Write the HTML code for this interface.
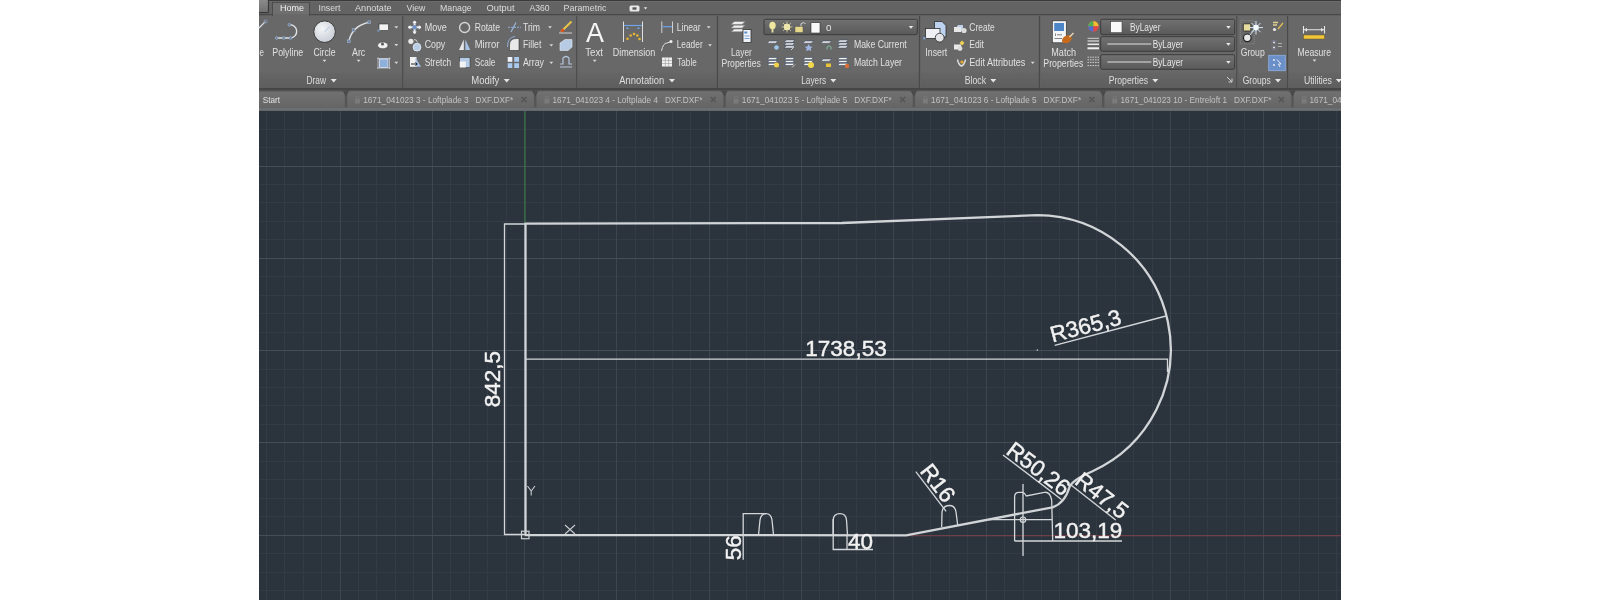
<!DOCTYPE html>
<html><head><meta charset="utf-8">
<style>
html,body{margin:0;padding:0;background:#fff;width:1600px;height:600px;overflow:hidden}
svg{position:absolute;left:0;top:0;display:block;will-change:transform}
text{font-family:"Liberation Sans",sans-serif}
.gm{stroke:#333b46;stroke-width:1}
.gM{stroke:#454d59;stroke-width:1}
.gV{stroke:#3d4550;stroke-width:1}
.rt{fill:#e6e6e6;font-size:10px}
.tt{fill:#d8d8d8;font-size:10px}
.ob{stroke:#e2e4e6;fill:none}
.dm{stroke:#d0d3d6;fill:none;stroke-width:1}
.dt{fill:#f2f2f2;font-size:22.5px;stroke:#f2f2f2;stroke-width:0.45px}
</style></head><body>
<svg width="1600" height="600" viewBox="0 0 1600 600">
<rect x="259" y="0" width="1082" height="600" fill="#2b333d"/>
<!-- grid -->
<g shape-rendering="crispEdges">
<line x1="266.16" y1="111" x2="266.16" y2="600" class="gm"/>
<line x1="284.62" y1="111" x2="284.62" y2="600" class="gm"/>
<line x1="303.08" y1="111" x2="303.08" y2="600" class="gm"/>
<line x1="321.54" y1="111" x2="321.54" y2="600" class="gm"/>
<line x1="358.46" y1="111" x2="358.46" y2="600" class="gm"/>
<line x1="376.92" y1="111" x2="376.92" y2="600" class="gm"/>
<line x1="395.38" y1="111" x2="395.38" y2="600" class="gm"/>
<line x1="413.84" y1="111" x2="413.84" y2="600" class="gm"/>
<line x1="450.76" y1="111" x2="450.76" y2="600" class="gm"/>
<line x1="469.22" y1="111" x2="469.22" y2="600" class="gm"/>
<line x1="487.68" y1="111" x2="487.68" y2="600" class="gm"/>
<line x1="506.14" y1="111" x2="506.14" y2="600" class="gm"/>
<line x1="543.06" y1="111" x2="543.06" y2="600" class="gm"/>
<line x1="561.52" y1="111" x2="561.52" y2="600" class="gm"/>
<line x1="579.98" y1="111" x2="579.98" y2="600" class="gm"/>
<line x1="598.44" y1="111" x2="598.44" y2="600" class="gm"/>
<line x1="635.36" y1="111" x2="635.36" y2="600" class="gm"/>
<line x1="653.82" y1="111" x2="653.82" y2="600" class="gm"/>
<line x1="672.28" y1="111" x2="672.28" y2="600" class="gm"/>
<line x1="690.74" y1="111" x2="690.74" y2="600" class="gm"/>
<line x1="727.66" y1="111" x2="727.66" y2="600" class="gm"/>
<line x1="746.12" y1="111" x2="746.12" y2="600" class="gm"/>
<line x1="764.58" y1="111" x2="764.58" y2="600" class="gm"/>
<line x1="783.04" y1="111" x2="783.04" y2="600" class="gm"/>
<line x1="819.96" y1="111" x2="819.96" y2="600" class="gm"/>
<line x1="838.42" y1="111" x2="838.42" y2="600" class="gm"/>
<line x1="856.88" y1="111" x2="856.88" y2="600" class="gm"/>
<line x1="875.34" y1="111" x2="875.34" y2="600" class="gm"/>
<line x1="912.26" y1="111" x2="912.26" y2="600" class="gm"/>
<line x1="930.72" y1="111" x2="930.72" y2="600" class="gm"/>
<line x1="949.18" y1="111" x2="949.18" y2="600" class="gm"/>
<line x1="967.64" y1="111" x2="967.64" y2="600" class="gm"/>
<line x1="1004.56" y1="111" x2="1004.56" y2="600" class="gm"/>
<line x1="1023.02" y1="111" x2="1023.02" y2="600" class="gm"/>
<line x1="1041.48" y1="111" x2="1041.48" y2="600" class="gm"/>
<line x1="1059.94" y1="111" x2="1059.94" y2="600" class="gm"/>
<line x1="1096.86" y1="111" x2="1096.86" y2="600" class="gm"/>
<line x1="1115.32" y1="111" x2="1115.32" y2="600" class="gm"/>
<line x1="1133.78" y1="111" x2="1133.78" y2="600" class="gm"/>
<line x1="1152.24" y1="111" x2="1152.24" y2="600" class="gm"/>
<line x1="1189.16" y1="111" x2="1189.16" y2="600" class="gm"/>
<line x1="1207.62" y1="111" x2="1207.62" y2="600" class="gm"/>
<line x1="1226.08" y1="111" x2="1226.08" y2="600" class="gm"/>
<line x1="1244.54" y1="111" x2="1244.54" y2="600" class="gm"/>
<line x1="1281.46" y1="111" x2="1281.46" y2="600" class="gm"/>
<line x1="1299.92" y1="111" x2="1299.92" y2="600" class="gm"/>
<line x1="1318.38" y1="111" x2="1318.38" y2="600" class="gm"/>
<line x1="1336.84" y1="111" x2="1336.84" y2="600" class="gm"/>
<line x1="259" y1="129.08" x2="1341" y2="129.08" class="gm"/>
<line x1="259" y1="147.54" x2="1341" y2="147.54" class="gm"/>
<line x1="259" y1="184.46" x2="1341" y2="184.46" class="gm"/>
<line x1="259" y1="202.92" x2="1341" y2="202.92" class="gm"/>
<line x1="259" y1="221.38" x2="1341" y2="221.38" class="gm"/>
<line x1="259" y1="239.84" x2="1341" y2="239.84" class="gm"/>
<line x1="259" y1="276.76" x2="1341" y2="276.76" class="gm"/>
<line x1="259" y1="295.22" x2="1341" y2="295.22" class="gm"/>
<line x1="259" y1="313.68" x2="1341" y2="313.68" class="gm"/>
<line x1="259" y1="332.14" x2="1341" y2="332.14" class="gm"/>
<line x1="259" y1="369.06" x2="1341" y2="369.06" class="gm"/>
<line x1="259" y1="387.52" x2="1341" y2="387.52" class="gm"/>
<line x1="259" y1="405.98" x2="1341" y2="405.98" class="gm"/>
<line x1="259" y1="424.44" x2="1341" y2="424.44" class="gm"/>
<line x1="259" y1="461.36" x2="1341" y2="461.36" class="gm"/>
<line x1="259" y1="479.82" x2="1341" y2="479.82" class="gm"/>
<line x1="259" y1="498.28" x2="1341" y2="498.28" class="gm"/>
<line x1="259" y1="516.74" x2="1341" y2="516.74" class="gm"/>
<line x1="259" y1="553.66" x2="1341" y2="553.66" class="gm"/>
<line x1="259" y1="572.12" x2="1341" y2="572.12" class="gm"/>
<line x1="259" y1="590.58" x2="1341" y2="590.58" class="gm"/>
<line x1="340.00" y1="111" x2="340.00" y2="600" class="gV"/>
<line x1="432.30" y1="111" x2="432.30" y2="600" class="gV"/>
<line x1="524.60" y1="111" x2="524.60" y2="600" class="gV"/>
<line x1="616.90" y1="111" x2="616.90" y2="600" class="gV"/>
<line x1="709.20" y1="111" x2="709.20" y2="600" class="gV"/>
<line x1="801.50" y1="111" x2="801.50" y2="600" class="gV"/>
<line x1="893.80" y1="111" x2="893.80" y2="600" class="gV"/>
<line x1="986.10" y1="111" x2="986.10" y2="600" class="gV"/>
<line x1="1078.40" y1="111" x2="1078.40" y2="600" class="gV"/>
<line x1="1170.70" y1="111" x2="1170.70" y2="600" class="gV"/>
<line x1="1263.00" y1="111" x2="1263.00" y2="600" class="gV"/>
<line x1="259" y1="166.00" x2="1341" y2="166.00" class="gM"/>
<line x1="259" y1="258.30" x2="1341" y2="258.30" class="gM"/>
<line x1="259" y1="350.60" x2="1341" y2="350.60" class="gM"/>
<line x1="259" y1="442.90" x2="1341" y2="442.90" class="gM"/>
<line x1="259" y1="535.20" x2="1341" y2="535.20" class="gM"/>
</g>
<line x1="906" y1="535.7" x2="1341" y2="535.7" stroke="#70404a" stroke-width="1.3"/>
<line x1="525" y1="111" x2="525" y2="224" stroke="#3a7d44" stroke-width="1.1"/>
<path d="M525,224 H504.5 V534.5 H525" stroke="#d4d7da" stroke-width="1.3" fill="none"/>
<path d="M525,359.2 H1167.5 V372" stroke="#d4d7da" stroke-width="1.3" fill="none"/>
<line x1="1054.7" y1="345.3" x2="1166" y2="316" stroke="#d4d7da" stroke-width="1.3" fill="none"/>
<circle cx="1037.3" cy="350" r="0.8" fill="#cfd2d5"/>
<path d="M743.2,559.7 V513.7 H766" stroke="#d4d7da" stroke-width="1.3" fill="none"/>
<path d="M833.2,519 V549.5 H873 M847,535 V549.5" stroke="#d4d7da" stroke-width="1.3" fill="none"/>
<line x1="915.8" y1="471.6" x2="946.1" y2="511.3" stroke="#d4d7da" stroke-width="1.3" fill="none"/>
<line x1="1003" y1="455" x2="1061.5" y2="499.4" stroke="#d4d7da" stroke-width="1.3" fill="none"/>
<line x1="1071" y1="485" x2="1115.7" y2="520" stroke="#d4d7da" stroke-width="1.3" fill="none"/>
<path d="M1014.6,541 V497 Q1014.6,492.3 1019,492.3 H1023 Q1024.5,492.5 1026.3,496 L1044.3,492.3 Q1050,491.5 1051.7,500 L1052.7,541 M1014.6,541 H1122 M989,519.7 H1052.7 M1023,484 V556" stroke="#d4d7da" stroke-width="1.3" fill="none"/>
<circle cx="1023" cy="519.7" r="2.7" stroke="#d4d7da" stroke-width="1.2" fill="none"/>
<path d="M758.5,535 L760,520 Q761,513.7 766,513.7 Q771,513.7 772,520 L773.5,535" stroke="#d4d7da" stroke-width="1.3" fill="none"/>
<path d="M833.2,535 V520 Q833.5,513.7 840,513.7 Q846,513.7 846.5,520 L847.5,535" stroke="#d4d7da" stroke-width="1.3" fill="none"/>
<path d="M941.7,527 L942,512 Q943,505.5 949.5,505.5 Q955,505.5 956,512 L957.7,525" stroke="#d4d7da" stroke-width="1.3" fill="none"/>
<path d="M525.5,535 V223.6 L842,223 L1037.5,215.1 A134.2,134.2 0 0 1 1092,471.5 Q1073,479.5 1069.5,487 Q1065,503 1052.5,507.3 L906,535.3 Z" stroke="#d2d5d8" stroke-width="2.3" fill="none" stroke-linejoin="round"/>
<rect x="521.5" y="531.2" width="7.5" height="7.5" fill="none" stroke="#cfd2d5" stroke-width="1.2"/>
<path d="M527.5,486 L531.2,491 L535,486 M531.2,491 V495.5" stroke="#c8cbce" stroke-width="1.1" fill="none"/>
<path d="M565,525 L575,534 M575,525 L565,534" stroke="#c8cbce" stroke-width="1.1" fill="none"/>
<text x="499.7" y="379.0" transform="rotate(-90.00 499.7 379.0)" class="dt" text-anchor="middle">842,5</text>
<text x="846.0" y="356.3" transform="rotate(0.00 846.0 356.3)" class="dt" text-anchor="middle">1738,53</text>
<text x="1052.5" y="342.5" transform="rotate(-14.75 1052.5 342.5)" class="dt" text-anchor="start">R365,3</text>
<text x="741.0" y="547.7" transform="rotate(-90.00 741.0 547.7)" class="dt" text-anchor="middle">56</text>
<text x="848.0" y="548.5" transform="rotate(0.00 848.0 548.5)" class="dt" text-anchor="start">40</text>
<text x="1053.5" y="537.5" transform="rotate(0.00 1053.5 537.5)" class="dt" text-anchor="start">103,19</text>
<text x="919.2" y="471.3" transform="rotate(52.60 919.2 471.3)" class="dt" text-anchor="start">R16</text>
<text x="1005.0" y="453.0" transform="rotate(37.20 1005.0 453.0)" class="dt" text-anchor="start">R50,26</text>
<text x="1073.5" y="483.0" transform="rotate(38.00 1073.5 483.0)" class="dt" text-anchor="start">R47,5</text>
<!-- ribbon -->
<rect x="259" y="0" width="1082" height="111" fill="#686868"/>
<rect x="259" y="0" width="1082" height="15" fill="#636363"/>
<rect x="259" y="0" width="1082" height="1.1" fill="#3a3a3a"/>
<rect x="259" y="1.1" width="1082" height="0.8" fill="#6e6e6e"/>
<rect x="259" y="14.2" width="1082" height="1" fill="#424242"/>
<defs><linearGradient id="gb" x1="0" y1="0" x2="0" y2="1"><stop offset="0" stop-color="#8a8a8a"/><stop offset="1" stop-color="#707070"/></linearGradient><linearGradient id="gt" x1="0" y1="0" x2="0" y2="1"><stop offset="0" stop-color="#6c6c6c"/><stop offset="1" stop-color="#606060"/></linearGradient><linearGradient id="gd" x1="0" y1="0" x2="0" y2="1"><stop offset="0" stop-color="#727272"/><stop offset="0.5" stop-color="#656565"/><stop offset="1" stop-color="#5a5a5a"/></linearGradient><linearGradient id="gtb" x1="0" y1="0" x2="0" y2="1"><stop offset="0" stop-color="#656565"/><stop offset="1" stop-color="#5e5e5e"/></linearGradient><radialGradient id="gc" cx="0.4" cy="0.35" r="0.7"><stop offset="0" stop-color="#f4f6f8"/><stop offset="1" stop-color="#c6ccd4"/></radialGradient></defs>
<rect x="259" y="0" width="9.2" height="12.2" fill="url(#gb)"/>
<path d="M268.4,0 V12.6 H259" stroke="#333" stroke-width="1" fill="none"/>
<rect x="272.5" y="2.3" width="37" height="13" fill="#6f6f6f" stroke="#454545" stroke-width="0.8"/>
<rect x="273" y="14" width="36" height="2" fill="#686868"/>
<text x="280.0" y="10.9" font-size="8.8" fill="#f2f2f2" textLength="24.0" lengthAdjust="spacingAndGlyphs">Home</text>
<text x="318.5" y="10.9" font-size="8.8" fill="#dcdcdc" textLength="22.0" lengthAdjust="spacingAndGlyphs">Insert</text>
<text x="355.0" y="10.9" font-size="8.8" fill="#dcdcdc" textLength="36.5" lengthAdjust="spacingAndGlyphs">Annotate</text>
<text x="406.6" y="10.9" font-size="8.8" fill="#dcdcdc" textLength="18.8" lengthAdjust="spacingAndGlyphs">View</text>
<text x="440.0" y="10.9" font-size="8.8" fill="#dcdcdc" textLength="31.7" lengthAdjust="spacingAndGlyphs">Manage</text>
<text x="486.6" y="10.9" font-size="8.8" fill="#dcdcdc" textLength="28.0" lengthAdjust="spacingAndGlyphs">Output</text>
<text x="529.5" y="10.9" font-size="8.8" fill="#dcdcdc" textLength="20.1" lengthAdjust="spacingAndGlyphs">A360</text>
<text x="563.6" y="10.9" font-size="8.8" fill="#dcdcdc" textLength="42.9" lengthAdjust="spacingAndGlyphs">Parametric</text>
<rect x="629.5" y="5.5" width="10" height="6" rx="1.5" fill="#e8e8e8"/><rect x="632.5" y="7.3" width="4" height="2.4" fill="#555"/>
<path d="M643.7,7.3 L647.3,7.3 L645.5,9.5 Z" fill="#e0e0e0"/>
<rect x="259" y="72.7" width="1082" height="15.3" fill="url(#gtb)"/>
<rect x="259" y="88" width="1082" height="2.5" fill="#464646"/>
<rect x="402.2" y="16" width="1.2" height="72" fill="#4a4a4a"/>
<rect x="403.4" y="16" width="0.8" height="72" fill="#626262"/>
<rect x="576.2" y="16" width="1.2" height="72" fill="#4a4a4a"/>
<rect x="577.4" y="16" width="0.8" height="72" fill="#626262"/>
<rect x="716.8" y="16" width="1.2" height="72" fill="#4a4a4a"/>
<rect x="718.0" y="16" width="0.8" height="72" fill="#626262"/>
<rect x="918.8" y="16" width="1.2" height="72" fill="#4a4a4a"/>
<rect x="920.0" y="16" width="0.8" height="72" fill="#626262"/>
<rect x="1038.8" y="16" width="1.2" height="72" fill="#4a4a4a"/>
<rect x="1040.0" y="16" width="0.8" height="72" fill="#626262"/>
<rect x="1236.2" y="16" width="1.2" height="72" fill="#4a4a4a"/>
<rect x="1237.4" y="16" width="0.8" height="72" fill="#626262"/>
<rect x="1287.0" y="16" width="1.2" height="72" fill="#4a4a4a"/>
<rect x="1288.2" y="16" width="0.8" height="72" fill="#626262"/>
<text x="259.6" y="55.6" font-size="10.2" fill="#e0e0e0" textLength="4.4" lengthAdjust="spacingAndGlyphs">e</text>
<text x="272.3" y="55.6" font-size="10.2" fill="#e0e0e0" textLength="31.0" lengthAdjust="spacingAndGlyphs">Polyline</text>
<text x="313.4" y="55.6" font-size="10.2" fill="#e0e0e0" textLength="22.2" lengthAdjust="spacingAndGlyphs">Circle</text>
<text x="352.0" y="55.6" font-size="10.2" fill="#e0e0e0" textLength="13.3" lengthAdjust="spacingAndGlyphs">Arc</text>
<text x="424.7" y="30.6" font-size="10.2" fill="#e0e0e0" textLength="22.0" lengthAdjust="spacingAndGlyphs">Move</text>
<text x="424.7" y="48.2" font-size="10.2" fill="#e0e0e0" textLength="20.6" lengthAdjust="spacingAndGlyphs">Copy</text>
<text x="424.7" y="65.8" font-size="10.2" fill="#e0e0e0" textLength="26.6" lengthAdjust="spacingAndGlyphs">Stretch</text>
<text x="474.7" y="30.6" font-size="10.2" fill="#e0e0e0" textLength="25.3" lengthAdjust="spacingAndGlyphs">Rotate</text>
<text x="474.7" y="48.2" font-size="10.2" fill="#e0e0e0" textLength="24.6" lengthAdjust="spacingAndGlyphs">Mirror</text>
<text x="474.7" y="65.8" font-size="10.2" fill="#e0e0e0" textLength="20.6" lengthAdjust="spacingAndGlyphs">Scale</text>
<text x="523.0" y="30.6" font-size="10.2" fill="#e0e0e0" textLength="17.0" lengthAdjust="spacingAndGlyphs">Trim</text>
<text x="523.0" y="48.2" font-size="10.2" fill="#e0e0e0" textLength="18.3" lengthAdjust="spacingAndGlyphs">Fillet</text>
<text x="523.0" y="65.8" font-size="10.2" fill="#e0e0e0" textLength="21.0" lengthAdjust="spacingAndGlyphs">Array</text>
<text x="585.3" y="55.6" font-size="10.2" fill="#e0e0e0" textLength="17.7" lengthAdjust="spacingAndGlyphs">Text</text>
<text x="612.7" y="55.6" font-size="10.2" fill="#e0e0e0" textLength="42.6" lengthAdjust="spacingAndGlyphs">Dimension</text>
<text x="676.7" y="30.6" font-size="10.2" fill="#e0e0e0" textLength="24.0" lengthAdjust="spacingAndGlyphs">Linear</text>
<text x="676.7" y="48.2" font-size="10.2" fill="#e0e0e0" textLength="26.0" lengthAdjust="spacingAndGlyphs">Leader</text>
<text x="677.3" y="65.8" font-size="10.2" fill="#e0e0e0" textLength="19.4" lengthAdjust="spacingAndGlyphs">Table</text>
<text x="731.0" y="55.6" font-size="10.2" fill="#e0e0e0" textLength="20.8" lengthAdjust="spacingAndGlyphs">Layer</text>
<text x="721.5" y="66.6" font-size="10.2" fill="#e0e0e0" textLength="39.3" lengthAdjust="spacingAndGlyphs">Properties</text>
<text x="854.0" y="48.2" font-size="10.2" fill="#e0e0e0" textLength="52.7" lengthAdjust="spacingAndGlyphs">Make Current</text>
<text x="854.0" y="65.8" font-size="10.2" fill="#e0e0e0" textLength="48.0" lengthAdjust="spacingAndGlyphs">Match Layer</text>
<text x="925.3" y="55.6" font-size="10.2" fill="#e0e0e0" textLength="22.0" lengthAdjust="spacingAndGlyphs">Insert</text>
<text x="969.3" y="30.6" font-size="10.2" fill="#e0e0e0" textLength="25.4" lengthAdjust="spacingAndGlyphs">Create</text>
<text x="969.3" y="48.2" font-size="10.2" fill="#e0e0e0" textLength="14.7" lengthAdjust="spacingAndGlyphs">Edit</text>
<text x="969.3" y="65.8" font-size="10.2" fill="#e0e0e0" textLength="56.0" lengthAdjust="spacingAndGlyphs">Edit Attributes</text>
<text x="1051.3" y="55.6" font-size="10.2" fill="#e0e0e0" textLength="24.7" lengthAdjust="spacingAndGlyphs">Match</text>
<text x="1043.3" y="66.6" font-size="10.2" fill="#e0e0e0" textLength="40.0" lengthAdjust="spacingAndGlyphs">Properties</text>
<text x="1240.7" y="55.6" font-size="10.2" fill="#e0e0e0" textLength="24.0" lengthAdjust="spacingAndGlyphs">Group</text>
<text x="1297.5" y="55.6" font-size="10.2" fill="#e0e0e0" textLength="33.5" lengthAdjust="spacingAndGlyphs">Measure</text>
<text x="306.5" y="84.0" font-size="10.2" fill="#dedede" textLength="19.5" lengthAdjust="spacingAndGlyphs">Draw</text>
<path d="M330.7,78.9 L336.7,78.9 L333.7,82.5 Z" fill="#e6e6e6"/>
<text x="471.3" y="84.0" font-size="10.2" fill="#dedede" textLength="28.0" lengthAdjust="spacingAndGlyphs">Modify</text>
<path d="M503.7,78.9 L509.7,78.9 L506.7,82.5 Z" fill="#e6e6e6"/>
<text x="619.3" y="84.0" font-size="10.2" fill="#dedede" textLength="45.0" lengthAdjust="spacingAndGlyphs">Annotation</text>
<path d="M669.0,78.9 L675.0,78.9 L672.0,82.5 Z" fill="#e6e6e6"/>
<text x="801.3" y="84.0" font-size="10.2" fill="#dedede" textLength="24.7" lengthAdjust="spacingAndGlyphs">Layers</text>
<path d="M830.3,78.9 L836.3,78.9 L833.3,82.5 Z" fill="#e6e6e6"/>
<text x="964.7" y="84.0" font-size="10.2" fill="#dedede" textLength="21.3" lengthAdjust="spacingAndGlyphs">Block</text>
<path d="M990.3,78.9 L996.3,78.9 L993.3,82.5 Z" fill="#e6e6e6"/>
<text x="1108.7" y="84.0" font-size="10.2" fill="#dedede" textLength="39.3" lengthAdjust="spacingAndGlyphs">Properties</text>
<path d="M1152.3,78.9 L1158.3,78.9 L1155.3,82.5 Z" fill="#e6e6e6"/>
<text x="1242.7" y="84.0" font-size="10.2" fill="#dedede" textLength="28.0" lengthAdjust="spacingAndGlyphs">Groups</text>
<path d="M1275.0,78.9 L1281.0,78.9 L1278.0,82.5 Z" fill="#e6e6e6"/>
<text x="1303.9" y="84.0" font-size="10.2" fill="#dedede" textLength="28.1" lengthAdjust="spacingAndGlyphs">Utilities</text>
<path d="M1335.8,78.9 L1341.8,78.9 L1338.8,82.5 Z" fill="#e6e6e6"/>
<path d="M394.4,26.3 L398.2,26.3 L396.3,28.5 Z" fill="#d8d8d8"/>
<path d="M394.4,44.0 L398.2,44.0 L396.3,46.2 Z" fill="#d8d8d8"/>
<path d="M394.4,61.7 L398.2,61.7 L396.3,63.9 Z" fill="#d8d8d8"/>
<path d="M548.1,26.3 L551.9,26.3 L550.0,28.5 Z" fill="#d8d8d8"/>
<path d="M549.4,44.3 L553.2,44.3 L551.3,46.5 Z" fill="#d8d8d8"/>
<path d="M549.4,61.7 L553.2,61.7 L551.3,63.9 Z" fill="#d8d8d8"/>
<path d="M706.8,26.3 L710.6,26.3 L708.7,28.5 Z" fill="#d8d8d8"/>
<path d="M708.1,44.3 L711.9,44.3 L710.0,46.5 Z" fill="#d8d8d8"/>
<path d="M1030.8,61.7 L1034.6,61.7 L1032.7,63.9 Z" fill="#d8d8d8"/>
<path d="M322.6,59.8 L326.4,59.8 L324.5,62.0 Z" fill="#d8d8d8"/>
<path d="M356.7,59.8 L360.5,59.8 L358.6,62.0 Z" fill="#d8d8d8"/>
<path d="M592.8,59.8 L596.6,59.8 L594.7,62.0 Z" fill="#d8d8d8"/>
<path d="M1312.6,59.5 L1316.4,59.5 L1314.5,61.7 Z" fill="#d8d8d8"/>
<path d="M1227,77 L1232,82 M1232,78.5 V82 H1228.5" stroke="#d0d0d0" stroke-width="1" fill="none"/>
<rect x="764" y="19.3" width="153.3" height="15.4" rx="1.5" fill="url(#gd)" stroke="#3c3c3c" stroke-width="1"/><path d="M908.7,25.9 L913.3,25.9 L911.0,28.7 Z" fill="#e8e8e8"/>
<rect x="1100.7" y="19.3" width="134.0" height="15.4" rx="1.5" fill="url(#gd)" stroke="#3c3c3c" stroke-width="1"/><path d="M1226.1,25.9 L1230.7,25.9 L1228.4,28.7 Z" fill="#e8e8e8"/>
<rect x="1100.7" y="36.7" width="134.0" height="14.6" rx="1.5" fill="url(#gd)" stroke="#3c3c3c" stroke-width="1"/><path d="M1226.1,42.9 L1230.7,42.9 L1228.4,45.7 Z" fill="#e8e8e8"/>
<rect x="1100.7" y="54.7" width="134.0" height="14.6" rx="1.5" fill="url(#gd)" stroke="#3c3c3c" stroke-width="1"/><path d="M1226.1,60.9 L1230.7,60.9 L1228.4,63.7 Z" fill="#e8e8e8"/>
<rect x="1110.7" y="21.5" width="11.3" height="11.2" fill="#fafafa" stroke="#444" stroke-width="0.6"/>
<text x="1130.0" y="31.0" font-size="10.2" fill="#e8e8e8" textLength="30.5" lengthAdjust="spacingAndGlyphs">ByLayer</text>
<line x1="1107.3" y1="44" x2="1151.3" y2="44" stroke="#e0e0e0" stroke-width="1"/>
<text x="1152.7" y="47.7" font-size="10.2" fill="#e8e8e8" textLength="30.3" lengthAdjust="spacingAndGlyphs">ByLayer</text>
<line x1="1107.3" y1="62" x2="1151.3" y2="62" stroke="#e0e0e0" stroke-width="1"/>
<text x="1152.7" y="65.7" font-size="10.2" fill="#e8e8e8" textLength="30.3" lengthAdjust="spacingAndGlyphs">ByLayer</text>
<rect x="811" y="22.7" width="9" height="10.3" fill="#fafafa" stroke="#333" stroke-width="0.6"/>
<text x="826.0" y="30.8" font-size="9.6" fill="#e8e8e8" textLength="5.5" lengthAdjust="spacingAndGlyphs">0</text>
<path d="M259,28 L265.3,21.6" stroke="#d8dde3" stroke-width="1.3"/><circle cx="265.6" cy="21.5" r="1.6" fill="none" stroke="#7f9bc0" stroke-width="0.9"/>
<path d="M276.7,38 H290.7 A6.6,6.6 0 0 0 289.4,24.8" stroke="#dfe3e8" stroke-width="1.4" fill="none"/>
<circle cx="276.7" cy="38" r="1.4" fill="#6a7f9c" stroke="#9fb2cc" stroke-width="0.7"/>
<circle cx="283.7" cy="38" r="1.4" fill="#6a7f9c" stroke="#9fb2cc" stroke-width="0.7"/>
<circle cx="290.5" cy="38" r="1.4" fill="#6a7f9c" stroke="#9fb2cc" stroke-width="0.7"/>
<circle cx="289.4" cy="24.8" r="1.4" fill="#6a7f9c" stroke="#9fb2cc" stroke-width="0.7"/>
<circle cx="324.6" cy="31.7" r="10.8" fill="url(#gc)" stroke="#3a3a3a" stroke-width="1"/>
<path d="M324.6,31.7 L329.5,26.8" stroke="#a9c4e4" stroke-width="1"/>
<path d="M348.9,41.2 Q352,26 369.1,22.2" stroke="#dfe3e8" stroke-width="1.4" fill="none"/>
<rect x="347.59999999999997" y="39.900000000000006" width="2.6" height="2.6" fill="#6a7f9c" stroke="#9fb2cc" stroke-width="0.7"/>
<rect x="352.2" y="28.7" width="2.6" height="2.6" fill="#6a7f9c" stroke="#9fb2cc" stroke-width="0.7"/>
<rect x="367.8" y="20.9" width="2.6" height="2.6" fill="#6a7f9c" stroke="#9fb2cc" stroke-width="0.7"/>
<rect x="379" y="24" width="9.5" height="6.5" fill="#f2f2f2" stroke="#333" stroke-width="0.6"/><circle cx="378.5" cy="30.5" r="1.3" fill="#7890b0"/>
<ellipse cx="382.8" cy="45.4" rx="5.2" ry="3.4" fill="#f0f0f0" stroke="#444" stroke-width="0.6"/><circle cx="382.5" cy="44" r="1.5" fill="#555"/>
<rect x="379.5" y="59" width="8.5" height="8.5" fill="#8fb0dc" stroke="#dfe7f2" stroke-width="0.8"/><path d="M378,57.5 V69 M389.5,57.5 V69 M377,58.5 H390.5 M377,68 H390.5" stroke="#d0d8e4" stroke-width="0.7"/>
<path d="M414.6,21 V33.4 M408.4,27.2 H420.8" stroke="#e6ebf2" stroke-width="2"/><path d="M414.6,20.4 l-2.2,2.6 h4.4z M414.6,34 l-2.2,-2.6 h4.4z M407.8,27.2 l2.6,-2.2 v4.4z M421.4,27.2 l-2.6,-2.2 v4.4z" fill="#f2f4f8"/><circle cx="414.6" cy="27.2" r="2.2" fill="#6d8fc4"/>
<circle cx="410.9" cy="41.3" r="2.6" fill="#e8e8e8"/><circle cx="417" cy="47.2" r="3.9" fill="#b9cde6" stroke="#e5ecf5" stroke-width="0.8"/><path d="M414,39.5 q3,0 3.5,3" stroke="#ddd" stroke-width="0.9" fill="none"/>
<rect x="410" y="57" width="6.5" height="9.8" fill="#f0f0f0"/><path d="M415.5,57.5 L421,66.8 H415.5 Z" fill="#a9c3e6"/><path d="M411,64 H417 M415.5,62.5 l1.8,1.5 -1.8,1.5" stroke="#111" stroke-width="0.9" fill="none"/>
<circle cx="464.6" cy="27.5" r="5" fill="none" stroke="#d6d6d6" stroke-width="1.4"/>
<path d="M463.8,39.5 L459,50 H463.8 Z" fill="#e8e8e8"/><path d="M465.4,39.5 L470.2,50 H465.4 Z" fill="#a9c3e6"/>
<rect x="459.7" y="57.5" width="10.3" height="10" fill="#b5cbe6" stroke="#333" stroke-width="0.5"/><rect x="459.7" y="61.5" width="6" height="6" fill="#f4f4f4"/>
<path d="M508,27.3 H521" stroke="#8eb0d8" stroke-width="1" stroke-dasharray="2,1"/><path d="M511,32 L516,22.5" stroke="#9ab6dc" stroke-width="1.2"/>
<path d="M509.5,50.5 V45 Q509.5,38.5 516.5,38.5 H519 V50.5 Z" fill="#e8e8e8" stroke="#333" stroke-width="0.6"/><path d="M507.5,47 Q507.5,37 515,36.5" stroke="#8fb0d8" stroke-width="1" fill="none"/>
<rect x="507.7" y="57" width="4.6" height="4.8" fill="#f0f4fa"/><rect x="514.2" y="57" width="4.8" height="4.8" fill="#a9c9ee"/><rect x="507.7" y="63.2" width="4.6" height="4.8" fill="#a9c9ee"/><rect x="514.2" y="63.2" width="4.8" height="4.8" fill="#a9c9ee"/>
<path d="M561,31.8 L571.5,21.5" stroke="#e9c34a" stroke-width="2"/><circle cx="562.5" cy="30.5" r="1.8" fill="#d9541f"/><path d="M559,33 H572" stroke="#cfcfcf" stroke-width="1"/>
<path d="M560,43 L565,39.5 H572 V47 L568,50.5 H560 Z" fill="#b7cbe4" stroke="#e4e9f0" stroke-width="0.6"/>
<path d="M560,67 H572 M560,64 H563 V58 Q566,55 569,58 V64 H572" stroke="#b5c6dc" stroke-width="1.2" fill="none"/>
<text x="586" y="42" font-size="28" fill="#f4f4f4" textLength="18" lengthAdjust="spacingAndGlyphs">A</text>
<path d="M623.5,21.5 V42 M642.5,21.5 V42" stroke="#e0e0e0" stroke-width="1"/><path d="M624,25.5 H642" stroke="#6fa3e6" stroke-width="1.2"/><path d="M626,29 l1.5,-2 1.5,2 z M640,29 l-1.5,-2 -1.5,2z" fill="#6fa3e6"/>
<circle cx="627.5" cy="38.7" r="1.3" fill="#e8b52e"/>
<circle cx="630.7" cy="35.5" r="1.3" fill="#e8b52e"/>
<circle cx="634" cy="34" r="1.3" fill="#e8b52e"/>
<circle cx="637.3" cy="35.5" r="1.3" fill="#e8b52e"/>
<circle cx="639.5" cy="39" r="1.3" fill="#e8b52e"/>
<path d="M661.8,21.5 V33 M672.5,21.5 V33" stroke="#dcdcdc" stroke-width="0.9"/><path d="M662.5,26.7 H672" stroke="#6fa3e6" stroke-width="1.2"/>
<path d="M661.5,51 Q663,43 667,43 L670,42" stroke="#e0e0e0" stroke-width="1" fill="none"/><circle cx="671" cy="41.5" r="1.5" fill="#f0f0f0"/>
<rect x="662" y="57.5" width="10" height="9" fill="#f0f0f0"/><path d="M662,60.5 H672 M662,63.5 H672 M665.3,57.5 V66.5 M668.6,57.5 V66.5" stroke="#9a9a9a" stroke-width="0.6"/>
<path d="M734.3,21.5 L745.3,21.5 L742.0,24.4 L731.0,24.4 Z" fill="#f0f0f0" stroke="#7a7a7a" stroke-width="0.6"/><path d="M734.3,25.2 L745.3,25.2 L742.0,28.1 L731.0,28.1 Z" fill="#f0f0f0" stroke="#7a7a7a" stroke-width="0.6"/><path d="M734.3,29.0 L745.3,29.0 L742.0,31.8 L731.0,31.8 Z" fill="#f0f0f0" stroke="#7a7a7a" stroke-width="0.6"/>
<rect x="743" y="29.5" width="8" height="13" fill="#f0f4f8" stroke="#333" stroke-width="0.8"/><rect x="744.3" y="31.5" width="3" height="2" fill="#5d8fd0"/><path d="M744.5,36 H749.5 M744.5,38.5 H749.5" stroke="#5d8fd0" stroke-width="0.8"/>
<ellipse cx="772.5" cy="25.5" rx="3.2" ry="3.8" fill="#f0e6a0"/><rect x="771.5" y="29" width="2" height="3.5" fill="#e0d9a0"/>
<circle cx="787" cy="27" r="3.2" fill="#f5ecb0"/><path d="M787,21.5 V32.5 M781.5,27 H792.5 M783,23 L791,31 M791,23 L783,31" stroke="#e8e0a8" stroke-width="0.7"/>
<rect x="795" y="26.5" width="8" height="6" fill="#e6d68a" stroke="#555" stroke-width="0.5"/><path d="M801,26.5 V23.8 Q803,21.6 805.5,23.5" stroke="#d0d0d0" stroke-width="1" fill="none"/>
<path d="M769.5,41.0 L778.0,41.0 L775.5,43.2 L767.0,43.2 Z" fill="#f2f2f2" stroke="#3a4a60" stroke-width="0.6"/>
<circle cx="776.5" cy="47.5" r="2.3" fill="#9cc8ee"/>
<path d="M786.5,40.0 L795.0,40.0 L792.5,42.2 L784.0,42.2 Z" fill="#f2f2f2" stroke="#3a4a60" stroke-width="0.6"/><path d="M786.5,42.9 L795.0,42.9 L792.5,45.1 L784.0,45.1 Z" fill="#f2f2f2" stroke="#3a4a60" stroke-width="0.6"/><path d="M786.5,45.8 L795.0,45.8 L792.5,48.0 L784.0,48.0 Z" fill="#f2f2f2" stroke="#3a4a60" stroke-width="0.6"/>
<path d="M791,50 l3,-3" stroke="#ccc" stroke-width="1"/>
<path d="M805.2,41.0 L813.8,41.0 L811.2,43.2 L802.7,43.2 Z" fill="#f2f2f2" stroke="#3a4a60" stroke-width="0.6"/>
<path d="M808.7,44 l1.3,2.5 2.7,.3 -2,1.8 .6,2.7 -2.6,-1.4 -2.6,1.4 .6,-2.7 -2,-1.8 2.7,-.3z" fill="#a0b4e0"/>
<path d="M823.2,41.0 L831.8,41.0 L829.2,43.2 L820.7,43.2 Z" fill="#f2f2f2" stroke="#3a4a60" stroke-width="0.6"/>
<path d="M827,49.5 v-2.5 q2,-2.5 4,0 v2.5" stroke="#7fc0a0" stroke-width="1" fill="none"/>
<path d="M839.8,40.0 L848.3,40.0 L845.8,42.2 L837.3,42.2 Z" fill="#f2f2f2" stroke="#3a4a60" stroke-width="0.6"/><path d="M839.8,42.9 L848.3,42.9 L845.8,45.1 L837.3,45.1 Z" fill="#f2f2f2" stroke="#3a4a60" stroke-width="0.6"/><path d="M839.8,45.8 L848.3,45.8 L845.8,48.0 L837.3,48.0 Z" fill="#f2f2f2" stroke="#3a4a60" stroke-width="0.6"/>

<path d="M769.5,57.5 L778.0,57.5 L775.5,59.7 L767.0,59.7 Z" fill="#f2f2f2" stroke="#3a4a60" stroke-width="0.6"/><path d="M769.5,60.4 L778.0,60.4 L775.5,62.6 L767.0,62.6 Z" fill="#f2f2f2" stroke="#3a4a60" stroke-width="0.6"/><path d="M769.5,63.3 L778.0,63.3 L775.5,65.5 L767.0,65.5 Z" fill="#f2f2f2" stroke="#3a4a60" stroke-width="0.6"/>
<circle cx="776.5" cy="65" r="2.5" fill="#f2d04a"/>
<path d="M786.5,57.5 L795.0,57.5 L792.5,59.7 L784.0,59.7 Z" fill="#f2f2f2" stroke="#3a4a60" stroke-width="0.6"/><path d="M786.5,60.4 L795.0,60.4 L792.5,62.6 L784.0,62.6 Z" fill="#f2f2f2" stroke="#3a4a60" stroke-width="0.6"/><path d="M786.5,63.3 L795.0,63.3 L792.5,65.5 L784.0,65.5 Z" fill="#f2f2f2" stroke="#3a4a60" stroke-width="0.6"/>
<path d="M792,67.5 l3,-3" stroke="#ccc" stroke-width="1"/>
<path d="M805.2,57.5 L813.8,57.5 L811.2,59.7 L802.7,59.7 Z" fill="#f2f2f2" stroke="#3a4a60" stroke-width="0.6"/><path d="M805.2,60.4 L813.8,60.4 L811.2,62.6 L802.7,62.6 Z" fill="#f2f2f2" stroke="#3a4a60" stroke-width="0.6"/><path d="M805.2,63.3 L813.8,63.3 L811.2,65.5 L802.7,65.5 Z" fill="#f2f2f2" stroke="#3a4a60" stroke-width="0.6"/>
<circle cx="811" cy="65" r="3" fill="#f2d94a"/>
<path d="M823.2,59.0 L831.8,59.0 L829.2,61.2 L820.7,61.2 Z" fill="#f2f2f2" stroke="#3a4a60" stroke-width="0.6"/>
<path d="M826,67 h5 v-3.5 h-5z" fill="#e8c23a"/>
<path d="M839.8,57.5 L848.3,57.5 L845.8,59.7 L837.3,59.7 Z" fill="#f2f2f2" stroke="#3a4a60" stroke-width="0.6"/><path d="M839.8,60.4 L848.3,60.4 L845.8,62.6 L837.3,62.6 Z" fill="#f2f2f2" stroke="#3a4a60" stroke-width="0.6"/><path d="M839.8,63.3 L848.3,63.3 L845.8,65.5 L837.3,65.5 Z" fill="#f2f2f2" stroke="#3a4a60" stroke-width="0.6"/>
<circle cx="847" cy="66" r="2.2" fill="#d9703a"/>
<path d="M934.5,21.5 H942 L946,25.5 V37 H934.5 Z" fill="#bcd2ee" stroke="#2e2e2e" stroke-width="0.8"/><rect x="925.5" y="28.5" width="14.5" height="10" fill="#eef0f3" stroke="#2e2e2e" stroke-width="0.8"/><circle cx="939.7" cy="37.7" r="4.4" fill="#e2e4e8" stroke="#2e2e2e" stroke-width="0.8"/><circle cx="924.3" cy="38.3" r="1.3" fill="#7fa0d0"/>
<path d="M954,31 l4,-6 h5 v6z" fill="#bdd0ea"/><rect x="954" y="27" width="7" height="5" fill="#e8e8e8"/><circle cx="964" cy="30.5" r="2.6" fill="#dcdcdc"/>
<rect x="954" y="44.5" width="7" height="5" fill="#e8e8e8"/><circle cx="960" cy="48.5" r="2.4" fill="#dcdcdc"/><path d="M962,40.5 l2.5,2.5 -2.5,2.5 -2.5,-2.5z" fill="#f0d050"/>
<path d="M957.5,59.5 q1,5.5 4,6.5 q3,-1 4,-6.5" stroke="#e0e0e0" stroke-width="1.4" fill="none"/><circle cx="962" cy="62" r="1.6" fill="#e8b030"/>
<rect x="1052.3" y="20.8" width="14" height="22" fill="#f2f4f6" stroke="#333" stroke-width="0.7"/><rect x="1054.2" y="23" width="9.8" height="8" fill="#4c86c8"/><path d="M1055.5,33.5 V36 M1057,34.8 H1062 M1054.5,38.5 H1062" stroke="#666" stroke-width="0.8"/><ellipse cx="1066.8" cy="39.3" rx="5.2" ry="3.6" fill="#c86a1c" transform="rotate(-30 1066.8 39.3)"/><path d="M1069.5,37 L1073.5,33" stroke="#e8d8b0" stroke-width="1.4"/>
<circle cx="1093.3" cy="26.3" r="5.2" fill="#e05050"/><path d="M1093.3,21.1 A5.2,5.2 0 0 1 1098.5,26.3 L1093.3,26.3Z" fill="#f0c030"/><path d="M1098.5,26.3 A5.2,5.2 0 0 1 1093.3,31.5 L1093.3,26.3Z" fill="#e04848"/><path d="M1093.3,31.5 A5.2,5.2 0 0 1 1088.1,26.3 L1093.3,26.3Z" fill="#4a70d8"/><path d="M1088.1,26.3 A5.2,5.2 0 0 1 1093.3,21.1 L1093.3,26.3Z" fill="#50b050"/>
<path d="M1087.5,38.3 H1099" stroke="#e8e8e8" stroke-width="0.8"/><path d="M1087.5,41 H1099" stroke="#e8e8e8" stroke-width="1.1"/><path d="M1087.5,44.3 H1099" stroke="#ececec" stroke-width="1.5"/><path d="M1087.5,48.3 H1099" stroke="#f0f0f0" stroke-width="2"/>
<path d="M1087.5,57.2 H1099 M1087.5,59.8 H1099 M1087.5,62.4 H1099 M1087.5,65.6 H1099" stroke="#d8d8d8" stroke-width="0.9" stroke-dasharray="1.6,0.9"/>
<rect x="1240.3" y="20.8" width="14" height="23" fill="none" stroke="#a0a0a0" stroke-width="0.6" stroke-dasharray="1,1"/><rect x="1243.3" y="23.8" width="7.5" height="7.2" rx="1" fill="#e8dea0" stroke="#222" stroke-width="0.8"/><circle cx="1247.3" cy="37.8" r="3.8" fill="#e8e8e8" stroke="#222" stroke-width="1.2"/><path d="M1249.5,35.5 L1255,29" stroke="#cfe4f6" stroke-width="1"/><path d="M1256,21 V34.5 M1249.5,27.6 H1263 M1251.5,23 L1260.5,32.2 M1260.5,23 L1251.5,32.2" stroke="#d0e6f8" stroke-width="1"/><circle cx="1256" cy="27.6" r="2.8" fill="#f4fbff"/>
<path d="M1273,22.5 H1278 M1273,25 H1277" stroke="#e0d090" stroke-width="1.3"/><circle cx="1274.5" cy="29.5" r="1.6" fill="#e8e8e8"/><path d="M1278,29 L1283,23" stroke="#e0c050" stroke-width="1.3"/>
<rect x="1272" y="40.5" width="4" height="9.5" fill="none" stroke="#7a7a9a" stroke-width="0.6"/><circle cx="1274" cy="42.5" r="1" fill="#e8e8e8"/><circle cx="1274" cy="47.5" r="1" fill="#e8e8e8"/><path d="M1278,43.5 H1282 M1278,46.5 H1282" stroke="#cfcfcf" stroke-width="0.7"/>
<rect x="1268.7" y="55.3" width="16.6" height="15.4" fill="#6b8fc8" stroke="#8fb0e0" stroke-width="0.8"/><circle cx="1274" cy="60" r="1" fill="#e8e8e8"/><circle cx="1274" cy="65" r="1" fill="#e8e8e8"/><path d="M1277,59.5 L1281,64 H1278.5 L1280,67" stroke="#f0f0f0" stroke-width="0.9" fill="none"/>
<path d="M1303.5,26 V33.5 M1324.5,26 V33.5 M1304,29.8 H1324" stroke="#e8e8e8" stroke-width="1.1"/><path d="M1304.5,29.8 l2.5,-2 v4z M1323.5,29.8 l-2.5,-2 v4z" fill="#e8e8e8"/><rect x="1303.5" y="35" width="21" height="4" fill="#f2c63a" stroke="#6a5a20" stroke-width="0.5"/>
<defs><linearGradient id="gft" x1="0" y1="0" x2="0" y2="1"><stop offset="0" stop-color="#717171"/><stop offset="1" stop-color="#656565"/></linearGradient></defs>
<rect x="259" y="90.5" width="1082" height="20" fill="#555"/>
<rect x="259" y="107.6" width="1082" height="3" fill="#6b6e72"/>
<path d="M259.0,107.8 V91.6 H339.8 Q344.8,91.2 344.8,96 V107.8 Z" fill="url(#gft)"/>
<path d="M347.2,107.8 V91.6 Q347.2,91.2 352.2,91.2 H529.1 Q534.1,91.2 534.1,96 V107.8 Z" fill="url(#gft)"/>
<path d="M536.5,107.8 V91.6 Q536.5,91.2 541.5,91.2 H718.4 Q723.4,91.2 723.4,96 V107.8 Z" fill="url(#gft)"/>
<path d="M725.8,107.8 V91.6 Q725.8,91.2 730.8,91.2 H907.7 Q912.7,91.2 912.7,96 V107.8 Z" fill="url(#gft)"/>
<path d="M915.1,107.8 V91.6 Q915.1,91.2 920.1,91.2 H1097.0 Q1102.0,91.2 1102.0,96 V107.8 Z" fill="url(#gft)"/>
<path d="M1104.4,107.8 V91.6 Q1104.4,91.2 1109.4,91.2 H1286.3 Q1291.3,91.2 1291.3,96 V107.8 Z" fill="url(#gft)"/>
<path d="M1293.7,107.8 V91.6 Q1293.7,91.2 1298.7,91.2 H1340.0 Q1345.0,91.2 1345.0,96 V107.8 Z" fill="url(#gft)"/>
<path d="M343.0,90.5 L349.0,90.5 L346.0,97 Z" fill="#4a4a4a"/>
<path d="M532.3,90.5 L538.3,90.5 L535.3,97 Z" fill="#4a4a4a"/>
<path d="M721.6,90.5 L727.6,90.5 L724.6,97 Z" fill="#4a4a4a"/>
<path d="M910.9,90.5 L916.9,90.5 L913.9,97 Z" fill="#4a4a4a"/>
<path d="M1100.2,90.5 L1106.2,90.5 L1103.2,97 Z" fill="#4a4a4a"/>
<path d="M1289.5,90.5 L1295.5,90.5 L1292.5,97 Z" fill="#4a4a4a"/>
<text x="262.7" y="102.9" font-size="8.4" fill="#e2e2e2" textLength="17.3" lengthAdjust="spacingAndGlyphs">Start</text>
<text x="363.2" y="102.9" font-size="8.4" fill="#c2c2c2" textLength="150.0" lengthAdjust="spacingAndGlyphs">1671_041023 3 - Loftplade 3 &#160; DXF.DXF*</text>
<rect x="355.0" y="99" width="5" height="4.5" fill="#7a7a7a"/><path d="M356.0,99 V97 Q357.5,95.5 359.0,97 V99" stroke="#7a7a7a" stroke-width="0.9" fill="none"/>
<path d="M521.5,97 L526.5,102 M526.5,97 L521.5,102" stroke="#555555" stroke-width="1.5"/>
<text x="552.5" y="102.9" font-size="8.4" fill="#c2c2c2" textLength="150.0" lengthAdjust="spacingAndGlyphs">1671_041023 4 - Loftplade 4 &#160; DXF.DXF*</text>
<rect x="544.3" y="99" width="5" height="4.5" fill="#7a7a7a"/><path d="M545.3,99 V97 Q546.8,95.5 548.3,97 V99" stroke="#7a7a7a" stroke-width="0.9" fill="none"/>
<path d="M710.8,97 L715.8,102 M715.8,97 L710.8,102" stroke="#555555" stroke-width="1.5"/>
<text x="741.8" y="102.9" font-size="8.4" fill="#c2c2c2" textLength="150.0" lengthAdjust="spacingAndGlyphs">1671_041023 5 - Loftplade 5 &#160; DXF.DXF*</text>
<rect x="733.6" y="99" width="5" height="4.5" fill="#7a7a7a"/><path d="M734.6,99 V97 Q736.1,95.5 737.6,97 V99" stroke="#7a7a7a" stroke-width="0.9" fill="none"/>
<path d="M900.1,97 L905.1,102 M905.1,97 L900.1,102" stroke="#555555" stroke-width="1.5"/>
<text x="931.1" y="102.9" font-size="8.4" fill="#c2c2c2" textLength="150.0" lengthAdjust="spacingAndGlyphs">1671_041023 6 - Loftplade 5 &#160; DXF.DXF*</text>
<rect x="922.9" y="99" width="5" height="4.5" fill="#7a7a7a"/><path d="M923.9,99 V97 Q925.4,95.5 926.9,97 V99" stroke="#7a7a7a" stroke-width="0.9" fill="none"/>
<path d="M1089.4,97 L1094.4,102 M1094.4,97 L1089.4,102" stroke="#555555" stroke-width="1.5"/>
<text x="1120.5" y="102.9" font-size="8.4" fill="#c2c2c2" textLength="151.0" lengthAdjust="spacingAndGlyphs">1671_041023 10 - Entreloft 1 &#160; DXF.DXF*</text>
<rect x="1112.2" y="99" width="5" height="4.5" fill="#7a7a7a"/><path d="M1113.2,99 V97 Q1114.7,95.5 1116.2,97 V99" stroke="#7a7a7a" stroke-width="0.9" fill="none"/>
<path d="M1278.9,97 L1283.9,102 M1283.9,97 L1278.9,102" stroke="#555555" stroke-width="1.5"/>
<rect x="1301.5" y="99" width="5" height="4.5" fill="#7a7a7a"/><path d="M1302.5,99 V97 Q1304.0,95.5 1305.5,97 V99" stroke="#7a7a7a" stroke-width="0.9" fill="none"/>
<text x="1309.5" y="102.9" font-size="8.4" fill="#c2c2c2" textLength="150.0" lengthAdjust="spacingAndGlyphs">1671_041023 6 - Loftplade 5 &#160; DXF.DXF*</text>
<!-- cover-right -->
<rect x="1341" y="0" width="259" height="600" fill="#fff"/>
</svg>
</body></html>
